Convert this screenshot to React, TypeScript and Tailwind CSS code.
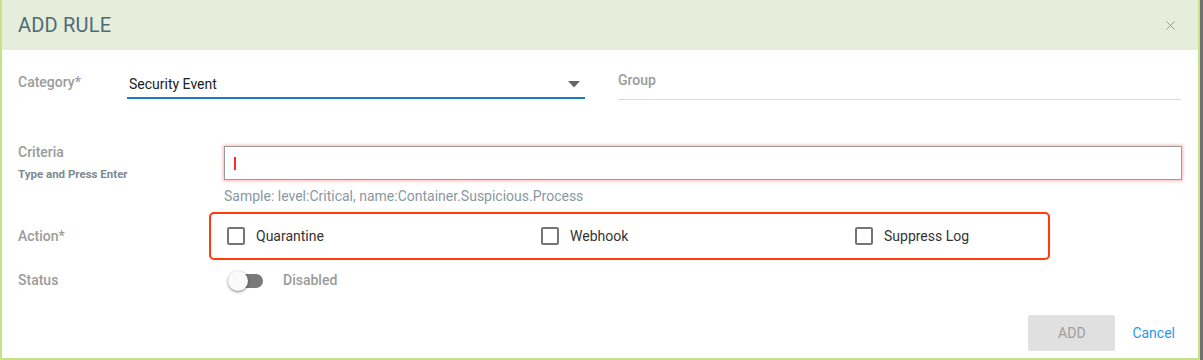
import { X } from 'lucide-react';

const LABEL = 'text-[14px] font-medium text-[#9b9b9b]';

function Checkbox({ label }: { label: string }) {
	return (
		<label className="flex items-center gap-[11px]">
			<span className="block size-[18px] rounded-[2px] border-2 border-[#757575] bg-white" />
			<span className="text-[14px] text-[#333]">{label}</span>
		</label>
	);
}

export default function App() {
	return (
		<div className="flex h-[360px] w-[1203px] bg-[#6f6f6f] font-['Roboto',sans-serif]">
			<div className="flex h-[360px] w-[1200px] flex-col border-x-2 border-b-2 border-[#c4e386] bg-white">
				<div className="flex h-[50px] shrink-0 items-center justify-between bg-[#e7eddb] pl-[16px] pr-[20px]">
					<h1 className="text-[20px] font-normal tracking-[0.2px] text-[#4d6b78]">ADD RULE</h1>
					<X className="size-[15px] text-[#8d98a3]" strokeWidth={1.5} />
				</div>

				<div className="flex flex-col px-[16px]">
					<div className="mt-[20px] flex items-start">
						<div className={`${LABEL} w-[109px] pt-[2px]`}>Category*</div>
						<div className="flex h-[29px] w-[458px] items-center justify-between border-b-2 border-[#1b7ac4] pl-[2px] pr-[5px] pt-[2px]">
							<span className="text-[14px] text-[#222]">Security Event</span>
							<svg width="12" height="7" viewBox="0 0 12 7">
								<path d="M0 0h12L6 6.5z" fill="#666" />
							</svg>
						</div>
						<div className="ml-[33px] flex h-[30px] w-[563px] items-start border-b border-[#d6dce1]">
							<span className={LABEL}>Group</span>
						</div>
					</div>

					<div className="mt-[46px] flex items-start">
						<div className="-mt-[4px] w-[208px]">
							<div className={LABEL}>Criteria</div>
							<div className="mt-[3px] text-[11.5px] font-bold text-[#7d8a94]">Type and Press Enter</div>
						</div>
						<div className="flex flex-col">
							<div className="flex h-[34px] w-[958px] items-center border border-[#9a9a9a] pl-[9px] shadow-[0_0_3px_1px_rgba(255,90,90,0.45)]">
								<span className="h-[13px] w-[1.5px] bg-[#ff2a2a]" />
							</div>
							<div className="mt-[6px] text-[14px] text-[#8a98a3]">Sample: level:Critical, name:Container.Suspicious.Process</div>
						</div>
					</div>

					<div className="mt-[5px] flex items-center">
						<div className={`${LABEL} w-[191px]`}>Action*</div>
						<div className="flex h-[48px] w-[841px] items-center rounded-[5px] border-2 border-[#ff3b0a] pl-[16px]">
							<div className="w-[314px]">
								<Checkbox label="Quarantine" />
							</div>
							<div className="w-[314px]">
								<Checkbox label="Webhook" />
							</div>
							<Checkbox label="Suppress Log" />
						</div>
					</div>

					<div className="mt-[10px] flex items-center">
						<div className={`${LABEL} w-[211px]`}>Status</div>
						<div className="relative h-[14px] w-[34px] rounded-full bg-[#7a7a7a]">
							<span className="absolute -left-[1px] -top-[3px] size-[20px] rounded-full bg-[#fafafa] shadow-[0_1px_3px_rgba(0,0,0,0.5)]" />
						</div>
						<span className={`${LABEL} ml-[20px]`}>Disabled</span>
					</div>
				</div>

				<div className="mt-auto mb-[7px] flex items-center justify-end gap-[17px] pr-[23px]">
					<button className="h-[36px] w-[87px] rounded-[2px] bg-[#e0e0e0] text-[14px] text-[#9e9e9e]">ADD</button>
					<button className="text-[14px] text-[#1f9be9]">Cancel</button>
				</div>
			</div>
		</div>
	);
}
